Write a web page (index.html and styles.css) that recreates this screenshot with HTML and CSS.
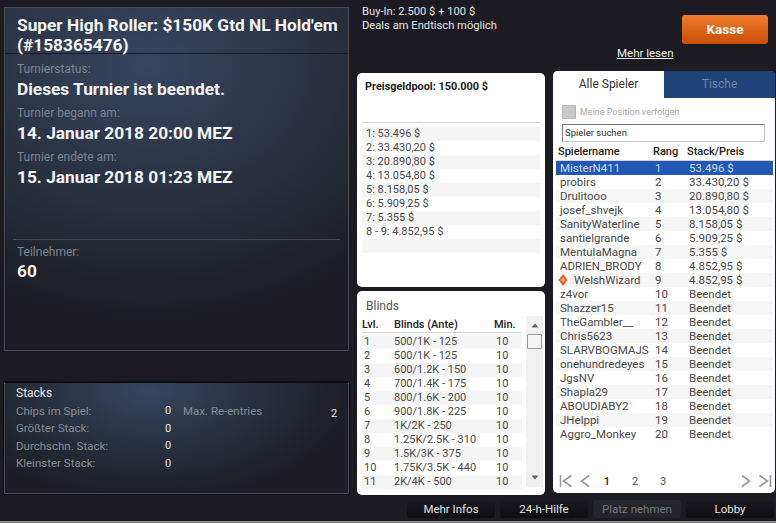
FILE: index.html
```html
<!DOCTYPE html>
<html>
<head>
  <meta charset="UTF-8">
  <link rel="stylesheet" href="styles.css">
</head>
<body>
  <div class="window">
    <div class="main">
      <div class="left">
        <div class="info dark-panel">
          <h1 class="info-title">Super High Roller: $150K Gtd NL Hold'em (#158365476)</h1>
          <div class="info-body">
            <p class="label">Turnierstatus:</p>
            <p class="value">Dieses Turnier ist beendet.</p>
            <p class="label">Turnier begann am:</p>
            <p class="value">14. Januar 2018 20:00 MEZ</p>
            <p class="label">Turnier endete am:</p>
            <p class="value">15. Januar 2018 01:23 MEZ</p>
          </div>
          <div class="entrants">
            <p class="label">Teilnehmer:</p>
            <p class="value">60</p>
          </div>
        </div>
        <div class="stacks dark-panel">
          <p class="stacks-title">Stacks</p>
          <div class="stacks-grid">
            <span class="stat-name">Chips im Spiel:</span><span class="stat-num">0</span><span class="stat-name re-name">Max. Re-entries</span><span class="stat-num re-num">2</span>
            <span class="stat-name">Größter Stack:</span><span class="stat-num">0</span><span></span><span></span>
            <span class="stat-name">Durchschn. Stack:</span><span class="stat-num">0</span><span></span><span></span>
            <span class="stat-name">Kleinster Stack:</span><span class="stat-num">0</span><span></span><span></span>
          </div>
        </div>
      </div>
      <div class="right">
        <div class="header">
          <div class="buyin">
            <p>Buy-In: 2.500 $ + 100 $</p>
            <p>Deals am Endtisch möglich</p>
          </div>
          <div class="header-actions">
            <div class="cashier">Kasse</div>
            <a class="more" href="#">Mehr lesen</a>
          </div>
        </div>
        <div class="columns">
          <div class="middle">
            <div class="card prizes">
              <p class="pool">Preisgeldpool: 150.000 $</p>
              <ul class="prize-list">
                <li>1: 53.496 $</li>
                <li>2: 33.430,20 $</li>
                <li>3: 20.890,80 $</li>
                <li>4: 13.054,80 $</li>
                <li>5: 8.158,05 $</li>
                <li>6: 5.909,25 $</li>
                <li>7: 5.355 $</li>
                <li>8 - 9: 4.852,95 $</li>
                <li>&nbsp;</li>
              </ul>
            </div>
            <div class="card blinds">
              <p class="blinds-title">Blinds</p>
              <div class="blinds-wrap">
                <div class="blinds-table">
                  <div class="blind-head"><span>Lvl.</span><span>Blinds (Ante)</span><span>Min.</span></div>
                  <div class="blind-row"><span>1</span><span>500/1K - 125</span><span>10</span></div>
                  <div class="blind-row"><span>2</span><span>500/1K - 125</span><span>10</span></div>
                  <div class="blind-row"><span>3</span><span>600/1.2K - 150</span><span>10</span></div>
                  <div class="blind-row"><span>4</span><span>700/1.4K - 175</span><span>10</span></div>
                  <div class="blind-row"><span>5</span><span>800/1.6K - 200</span><span>10</span></div>
                  <div class="blind-row"><span>6</span><span>900/1.8K - 225</span><span>10</span></div>
                  <div class="blind-row"><span>7</span><span>1K/2K - 250</span><span>10</span></div>
                  <div class="blind-row"><span>8</span><span>1.25K/2.5K - 310</span><span>10</span></div>
                  <div class="blind-row"><span>9</span><span>1.5K/3K - 375</span><span>10</span></div>
                  <div class="blind-row"><span>10</span><span>1.75K/3.5K - 440</span><span>10</span></div>
                  <div class="blind-row"><span>11</span><span>2K/4K - 500</span><span>10</span></div>
                </div>
                <div class="scrollbar">
                  <svg class="arrow" width="8" height="5" viewBox="0 0 8 5"><path d="M4 0.5 L7.5 4.5 H0.5 Z" fill="#666"/></svg>
                  <div class="thumb"></div>
                  <svg class="arrow" width="8" height="5" viewBox="0 0 8 5"><path d="M4 4.5 L7.5 0.5 H0.5 Z" fill="#666"/></svg>
                </div>
              </div>
            </div>
          </div>
          <div class="card players">
            <div class="tabs">
              <div class="tab active">Alle Spieler</div>
              <div class="tab">Tische</div>
            </div>
            <label class="track"><span class="checkbox"></span>Meine Position verfolgen</label>
            <div class="search">Spieler suchen</div>
            <div class="player-head"><span>Spielername</span><span>Rang</span><span>Stack/Preis</span></div>
            <div class="player-list">
              <div class="player selected"><span>MisterN411</span><span>1</span><span>53.496 $</span></div>
              <div class="player"><span>probirs</span><span>2</span><span>33.430,20 $</span></div>
              <div class="player"><span>Drulitooo</span><span>3</span><span>20.890,80 $</span></div>
              <div class="player"><span>josef_shvejk</span><span>4</span><span>13.054,80 $</span></div>
              <div class="player"><span>SanityWaterline</span><span>5</span><span>8.158,05 $</span></div>
              <div class="player"><span>santielgrande</span><span>6</span><span>5.909,25 $</span></div>
              <div class="player"><span>MentulaMagna</span><span>7</span><span>5.355 $</span></div>
              <div class="player"><span>ADRIEN_BRODY</span><span>8</span><span>4.852,95 $</span></div>
              <div class="player"><span class="pro"><svg class="diamond" width="10" height="12" viewBox="0 0 10 12"><path d="M5 0 L9.5 6 L5 12 L0.5 6 Z" fill="#e2622a"/><path d="M5 3.5 L7 6 L5 8.5 L3 6 Z" fill="#f6b48f"/></svg>WelshWizard</span><span>9</span><span>4.852,95 $</span></div>
              <div class="player"><span>z4vor</span><span>10</span><span>Beendet</span></div>
              <div class="player"><span>Shazzer15</span><span>11</span><span>Beendet</span></div>
              <div class="player"><span>TheGambler__</span><span>12</span><span>Beendet</span></div>
              <div class="player"><span>Chris5623</span><span>13</span><span>Beendet</span></div>
              <div class="player"><span>SLARVBOGMAJS</span><span>14</span><span>Beendet</span></div>
              <div class="player"><span>onehundredeyes</span><span>15</span><span>Beendet</span></div>
              <div class="player"><span>JgsNV</span><span>16</span><span>Beendet</span></div>
              <div class="player"><span>Shapla29</span><span>17</span><span>Beendet</span></div>
              <div class="player"><span>ABOUDIABY2</span><span>18</span><span>Beendet</span></div>
              <div class="player"><span>JHelppi</span><span>19</span><span>Beendet</span></div>
              <div class="player"><span>Aggro_Monkey</span><span>20</span><span>Beendet</span></div>
            </div>
            <div class="pager">
              <svg class="pager-icon first-page" width="14" height="14" viewBox="0 0 14 14"><path d="M1.5 1 V13 M12.5 1.5 L4.5 7 L12.5 12.5" fill="none" stroke="#999" stroke-width="1.6"/></svg>
              <svg class="pager-icon prev-page" width="10" height="14" viewBox="0 0 10 14"><path d="M9 1.5 L1.5 7 L9 12.5" fill="none" stroke="#999" stroke-width="1.6"/></svg>
              <span class="page current">1</span>
              <span class="page">2</span>
              <span class="page">3</span>
              <svg class="pager-icon next-page" width="10" height="14" viewBox="0 0 10 14"><path d="M1 1.5 L8.5 7 L1 12.5" fill="none" stroke="#999" stroke-width="1.6"/></svg>
              <svg class="pager-icon last-page" width="14" height="14" viewBox="0 0 14 14"><path d="M12.5 1 V13 M1.5 1.5 L9.5 7 L1.5 12.5" fill="none" stroke="#999" stroke-width="1.6"/></svg>
            </div>
          </div>
        </div>
      </div>
    </div>
    <div class="footer">
      <div class="btn">Mehr Infos</div>
      <div class="btn">24-h-Hilfe</div>
      <div class="btn disabled">Platz nehmen</div>
      <div class="btn">Lobby</div>
    </div>
  </div>
</body>
</html>
```

FILE: styles.css
```css
html, body {
  margin: 0;
  padding: 0;
  background: #1b1b21;
}
body {
  width: 776px;
  height: 523px;
  overflow: hidden;
  font-family: Roboto, "Liberation Sans", sans-serif;
  font-size: 12px;
}
p, h1, ul {
  margin: 0;
  padding: 0;
}
.window {
  height: 523px;
  display: flex;
  flex-direction: column;
  border-bottom: 2px solid #8a8a8a;
  box-sizing: border-box;
}
.main {
  display: flex;
  height: 497px;
}

/* left side */
.left {
  width: 357px;
  box-sizing: border-box;
  padding: 7px 8px 0 4px;
}
.dark-panel {
  border: 1px solid #474a55;
}
.info {
  height: 344px;
  box-sizing: border-box;
  display: flex;
  flex-direction: column;
  background: radial-gradient(ellipse 330px 260px at 42% 55px, #364660 0%, #2a3242 50%, #1c1c22 100%);
}
.info-title {
  font-size: 17.3px;
  line-height: 20px;
  font-weight: 700;
  color: #f4f5f7;
  padding: 7px 0 0 12px;
  height: 46px;
  box-sizing: border-box;
  border-bottom: 1px solid #191c24;
}
.info-body {
  height: 186px;
  box-sizing: border-box;
  padding: 8px 12px 0 4px;
  margin: 0 8px;
  border-bottom: 1px solid #474a55;
}
.entrants {
  padding: 5px 12px 0;
}
.label {
  font-size: 12px;
  line-height: 15px;
  color: #7f8491;
}
.value {
  font-size: 17.3px;
  line-height: 20px;
  font-weight: 700;
  color: #f4f5f7;
  margin: 2px 0 7px;
}
.entrants .value {
  margin-top: 1px;
}
.stacks {
  margin-top: 31px;
  height: 112px;
  box-sizing: border-box;
  padding: 1px 11px;
  border-top-color: #0d0d10;
  box-shadow: 0 0 0 1px #0d0d10;
  background: radial-gradient(ellipse 210px 110px at 42% 8px, #364660 0%, #272e3d 55%, #1c1c22 100%);
}
.stacks-title {
  color: #e6e7ea;
  font-size: 12px;
  line-height: 18px;
}
.stacks-grid {
  display: grid;
  grid-template-columns: 146px 12px 155px 10px;
  grid-auto-rows: 17.5px;
  align-items: center;
  font-size: 11.5px;
}
.stat-name {
  color: #8a8d95;
}
.stat-num {
  color: #e6e7ea;
  text-align: center;
  font-size: 11px;
}
.re-name {
  padding-left: 9px;
}
.re-num {
  padding-top: 5px;
}

/* right side */
.right {
  width: 419px;
}
.header {
  height: 71px;
  display: flex;
  justify-content: space-between;
  color: #e4e5e8;
}
.buyin {
  padding: 5px 0 0 5px;
  font-size: 11.2px;
  line-height: 13.5px;
}
.header-actions {
  width: 170px;
}
.cashier {
  width: 86px;
  height: 29px;
  margin: 15px 0 0 76px;
  border-radius: 3px;
  background: linear-gradient(#ef7b2c, #c94e07);
  color: #fff5ea;
  font-weight: 700;
  font-size: 13.5px;
  line-height: 29px;
  text-align: center;
}
.more {
  display: block;
  color: #eceded;
  font-size: 11.5px;
  line-height: 13px;
  margin: 3px 0 0 11px;
}
.columns {
  display: flex;
}
.middle {
  width: 188px;
  margin-right: 8px;
  padding-top: 2px;
  display: flex;
  flex-direction: column;
  gap: 4px;
}
.card {
  background: #fff;
  border-radius: 5px;
  color: #3b3b3b;
}

/* prize pool */
.prizes {
  height: 214px;
  padding: 0 5px;
  box-sizing: border-box;
}
.pool {
  font-weight: 700;
  font-size: 10.9px;
  line-height: 14px;
  color: #222;
  padding: 7px 0 0 3px;
  height: 50px;
  box-sizing: border-box;
  border-bottom: 1px solid #d4d4d4;
}
.prize-list {
  list-style: none;
  margin-top: 4px;
  font-size: 11px;
  color: #4a4a4a;
}
.prize-list li {
  height: 14px;
  line-height: 14px;
  padding-left: 4px;
}
.prize-list li:nth-child(odd) {
  background: #f5f5f5;
}

/* blinds */
.blinds {
  height: 204px;
  padding: 8px 2px 0 5px;
  box-sizing: border-box;
}
.blinds-title {
  color: #555;
  font-size: 12px;
  line-height: 14px;
  padding-left: 4px;
}
.blinds-wrap {
  display: flex;
  margin-top: 3px;
}
.blinds-table {
  width: 160px;
  font-size: 11px;
  color: #4a4a4a;
}
.blind-head, .blind-row {
  display: grid;
}
.blind-head {
  grid-template-columns: 32px 100px 28px;
  font-weight: 500;
  font-size: 11px;
  color: #222;
  height: 17px;
  line-height: 17px;
  border-bottom: 1px solid #d4d4d4;
  margin-bottom: 2px;
  box-sizing: border-box;
}
.blind-row {
  grid-template-columns: 30px 102px 26px;
  height: 14px;
  line-height: 14px;
  padding-left: 2px;
}
.blind-row:nth-child(even) {
  background: #f5f5f5;
}
.scrollbar {
  width: 17px;
  height: 171px;
  margin-left: 4px;
  background: #f1f1f1;
  display: flex;
  flex-direction: column;
  align-items: center;
}
.arrow {
  margin-top: 7px;
  flex: none;
}
.arrow:last-child {
  margin-top: 126px;
}
.thumb {
  width: 13px;
  height: 13px;
  margin-top: 6px;
  background: #f4f4f4;
  border: 1px solid #9a9a9a;
  border-radius: 1px;
  flex: none;
}

/* players */
.players {
  width: 222px;
  height: 422px;
  position: relative;
}
.tabs {
  display: flex;
  height: 27px;
}
.tab {
  flex: 1;
  text-align: center;
  font-size: 12px;
  line-height: 27px;
  color: #6d88a8;
  background: #1f4279;
  border-top-right-radius: 4px;
}
.tab.active {
  flex: none;
  width: 111px;
  color: #333;
  background: #fff;
  border-radius: 5px 0 0 0;
}
.track {
  display: flex;
  align-items: center;
  color: #a9a9a9;
  font-size: 9px;
  height: 14px;
  margin: 7px 0 0 9px;
}
.checkbox {
  width: 12px;
  height: 12px;
  background: #c8c8c8;
  border: 1px solid #bbb;
  margin-right: 4px;
}
.search {
  height: 16px;
  margin: 5px 10px 0 9px;
  border: 1px solid #c9c9c9;
  border-top: 1px solid #777;
  border-left: 1px solid #777;
  font-size: 9.5px;
  line-height: 15px;
  color: #333;
  padding-left: 2px;
}
.player-head, .player {
  display: grid;
  grid-template-columns: 95px 34px 1fr;
}
.player-head {
  font-weight: 500;
  font-size: 11px;
  color: #222;
  height: 16px;
  line-height: 16px;
  margin: 2px 2px 0 3px;
  padding-left: 2px;
  border-bottom: 1px solid #d4d4d4;
}
.player-list {
  margin: 0 2px 0 3px;
}
.player {
  height: 14px;
  line-height: 14px;
  font-size: 11.5px;
  color: #4a4a4a;
  padding-left: 4px;
}
.player:nth-child(odd) {
  background: #f7f7f7;
}
.player.selected {
  background: #2257b4;
  color: #cfdcf2;
}
.pro {
  display: flex;
  align-items: center;
}
.diamond {
  margin: 0 6px 0 -2px;
  flex: none;
}
.pager {
  position: absolute;
  left: 6px;
  right: 3px;
  bottom: 5px;
  display: flex;
  align-items: center;
  height: 14px;
}
.first-page {
  margin-right: 7px;
}
.page {
  font-size: 11px;
  color: #555;
  width: 28px;
  text-align: center;
}
.page.current {
  color: #222;
  font-weight: 500;
  margin-left: 3px;
}
.next-page {
  margin-left: auto;
  margin-right: 7px;
}

/* bottom buttons */
.footer {
  display: flex;
  justify-content: flex-end;
  gap: 5px;
  padding: 3px 2px 0 0;
}
.btn {
  width: 88px;
  height: 18px;
  line-height: 18px;
  background: linear-gradient(#1a1a1f, #0e0e11);
  border-radius: 3px;
  text-align: center;
  font-size: 11.5px;
  color: #e2e2e2;
}
.btn.disabled {
  background: #24252b;
  color: #74767c;
}
```
